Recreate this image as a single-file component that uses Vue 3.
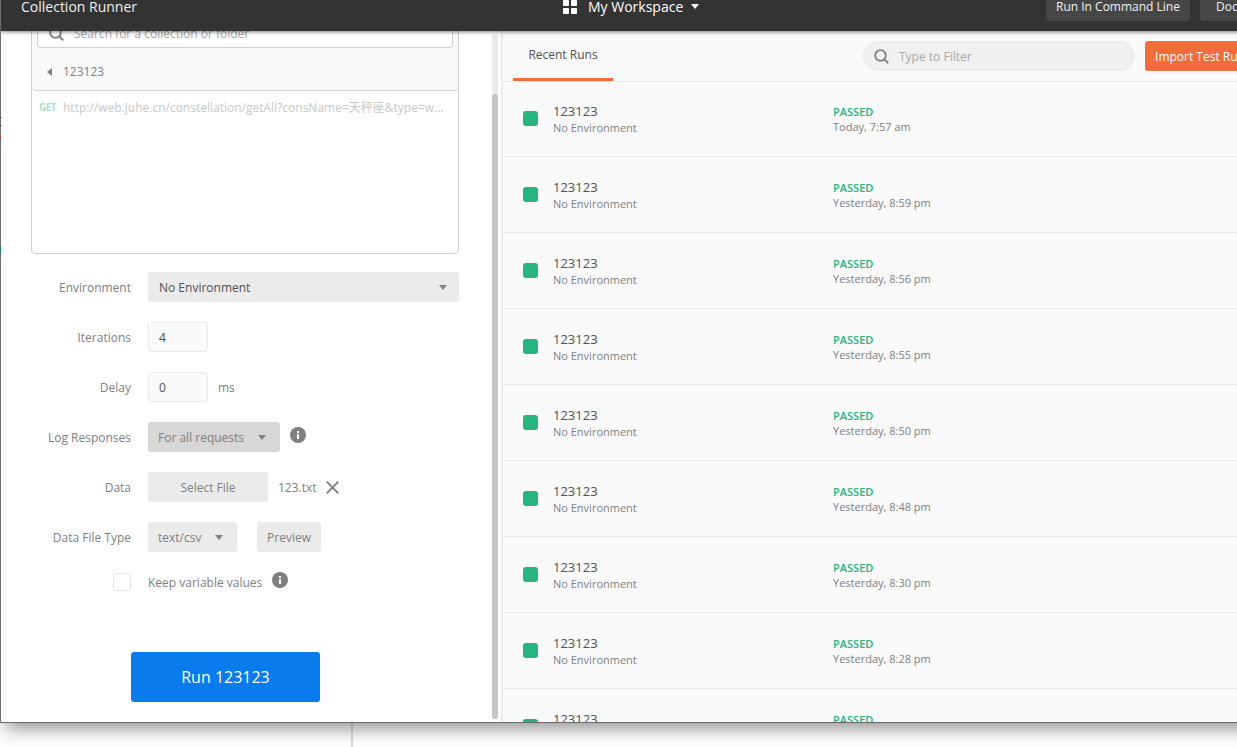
<!-- CollectionRunner -->

<script setup>
  import { ref } from 'vue'

  const collection = ref ( '123123' )
  const search = ref ( '' )
  const filter = ref ( '' )
  const iterations = ref ( '4' )
  const delay = ref ( '0' )
  const keep_values = ref ( false )

  const times = [
    'Today, 7:57 am',
    'Yesterday, 8:59 pm',
    'Yesterday, 8:56 pm',
    'Yesterday, 8:55 pm',
    'Yesterday, 8:50 pm',
    'Yesterday, 8:48 pm',
    'Yesterday, 8:30 pm',
    'Yesterday, 8:28 pm',
    'Yesterday, 8:26 pm',
  ]

  const runs = times.map ( ( time, id ) => ({
    id,
    time,
    name: '123123',
    environment: 'No Environment',
    status: 'PASSED',
  }))
</script>

<template>
  <div class="desktop">
    <div class="back_divider"></div>
    <div class="runner">
      <header class="runner_header">
        <div class="title">Collection Runner</div>
        <div class="workspace">
          <svg class="grid_icon" width="14" height="15" viewBox="0 0 14 15">
            <rect width="6" height="6" rx=".7" y="1" fill="#fff" />
            <rect width="6" height="6" rx=".7" x="8" y="1" fill="#fff" />
            <rect width="6" height="6" rx=".7" y="9" fill="#fff" />
            <rect width="6" height="6" rx=".7" x="8" y="9" fill="#fff" />
          </svg>
          <span>My Workspace</span>
          <svg class="white_caret" width="8" height="5" viewBox="0 0 8 5">
            <path d="M0 0h8L4 5z" fill="#fff" />
          </svg>
        </div>
        <div class="header_buttons">
          <button class="dark_btn">Run In Command Line</button>
          <button class="dark_btn docs">Docs</button>
        </div>
      </header>

      <div class="panes">
        <section class="config">
          <div class="config_content">
            <div class="picker">
              <div class="picker_head">
                <div class="search_box">
                  <svg width="15" height="15" viewBox="0 0 15 15">
                    <circle cx="6.500" cy="6.500" r="5.300" fill="none" stroke="#808080" stroke-width="1.800" />
                    <path d="M10.300 10.300l3.900 3.900" stroke="#808080" stroke-width="2" />
                  </svg>
                  <input v-model="search" placeholder="Search for a collection or folder">
                </div>
                <div class="crumb">
                  <svg width="5" height="8" viewBox="0 0 5 8">
                    <path d="M5 0v8L0 4z" fill="#808080" />
                  </svg>
                  <span>{{ collection }}</span>
                </div>
              </div>
              <div class="request">
                <span class="method">GET</span>
                <span class="url">http://web.juhe.cn/constellation/getAll?consName=天秤座&amp;type=w...</span>
              </div>
            </div>

            <div class="form_row">
              <label>Environment</label>
              <div class="select wide">
                <span>No Environment</span>
                <svg class="caret" width="8" height="5" viewBox="0 0 8 5"><path d="M0 0h8L4 5z" /></svg>
              </div>
            </div>
            <div class="form_row">
              <label>Iterations</label>
              <input v-model="iterations" class="number">
            </div>
            <div class="form_row">
              <label>Delay</label>
              <input v-model="delay" class="number">
              <span class="after">ms</span>
            </div>
            <div class="form_row">
              <label>Log Responses</label>
              <div class="select log">
                <span>For all requests</span>
                <svg class="caret" width="8" height="5" viewBox="0 0 8 5"><path d="M0 0h8L4 5z" /></svg>
              </div>
              <svg class="info" width="16" height="16" viewBox="0 0 16 16">
                <circle cx="8" cy="8" r="8" fill="#808080" />
                <path d="M7 4h2v2H7zM7 7h2v5H7z" fill="#fff" />
              </svg>
            </div>
            <div class="form_row">
              <label>Data</label>
              <button class="grey_btn file">Select File</button>
              <span class="after">123.txt</span>
              <svg class="remove" width="13" height="13" viewBox="0 0 13 13">
                <path d="M.700 .700l11.600 11.600M12.300 .700L.700 12.300" stroke="#808080" stroke-width="1.900" />
              </svg>
            </div>
            <div class="form_row">
              <label>Data File Type</label>
              <div class="select type">
                <span>text/csv</span>
                <svg class="caret" width="8" height="5" viewBox="0 0 8 5"><path d="M0 0h8L4 5z" /></svg>
              </div>
              <button class="grey_btn preview">Preview</button>
            </div>
            <div class="form_row keep">
              <label><input v-model="keep_values" type="checkbox" class="check"></label>
              <span>Keep variable values</span>
              <svg class="info" width="16" height="16" viewBox="0 0 16 16">
                <circle cx="8" cy="8" r="8" fill="#808080" />
                <path d="M7 4h2v2H7zM7 7h2v5H7z" fill="#fff" />
              </svg>
            </div>

            <button class="run_btn">Run {{ collection }}</button>
          </div>
          <div class="scroll_track">
            <div class="scroll_thumb"></div>
          </div>
        </section>

        <section class="results">
          <div class="results_head">
            <div class="tab">Recent Runs</div>
            <div class="filter_box">
              <svg width="15" height="15" viewBox="0 0 15 15">
                <circle cx="6.500" cy="6.500" r="5.300" fill="none" stroke="#808080" stroke-width="1.800" />
                <path d="M10.300 10.300l3.900 3.900" stroke="#808080" stroke-width="2" />
              </svg>
              <input v-model="filter" placeholder="Type to Filter">
            </div>
            <button class="import_btn">Import Test Run</button>
          </div>
          <div v-for="run in runs" :key="run.id" class="run">
            <div class="run_status"></div>
            <div class="run_name">
              <div class="name">{{ run.name }}</div>
              <div class="small">{{ run.environment }}</div>
            </div>
            <div class="run_result">
              <div class="passed">{{ run.status }}</div>
              <div class="small">{{ run.time }}</div>
            </div>
          </div>
        </section>
      </div>
    </div>
    <div class="back_edge"></div>
  </div>
</template>

<style>
  body {
    margin: 0;
    overflow: hidden;
  }
</style>

<style scoped>
  .desktop {
    position: relative;
    width: 1237px;
    height: 747px;
    overflow: hidden;
    background: #fff;
    font-family: "Open Sans", "Noto Sans CJK SC", sans-serif;
    font-size: 12px;
    line-height: 16px;
    color: #808080;
    white-space: nowrap;
  }
  .desktop * {
    box-sizing: border-box;
  }
  svg {
    display: block;
    flex: none;
  }
  button {
    border: 0;
    padding: 0;
    flex: none;
    font: inherit;
    color: inherit;
    border-radius: 3px;
  }
  input {
    font: inherit;
    color: #505050;
    min-width: 0;
    outline: 0;
  }
  input::placeholder {
    color: #a9a9a9;
    opacity: 1;
  }

  .back_divider {
    position: absolute;
    left: 351px;
    bottom: 0;
    width: 2px;
    height: 30px;
    background: #dcdcdc;
  }
  /* bits of the window behind, seen along the left border */
  .back_edge {
    position: absolute;
    left: 0;
    top: 117px;
    width: 1px;
    height: 136px;
    background: linear-gradient(
      #2b2b2b 1px, transparent 1px 8px,
      #2b2b2b 8px 9px, transparent 9px 19px,
      #a04a28 19px 22px, transparent 22px 129px,
      #1f7f5c 129px 136px
    );
  }
  .runner {
    position: relative;
    display: flex;
    flex-direction: column;
    width: 1260px;
    height: 723px;
    overflow: hidden;
    border-left: 1px solid #6e6e6e;
    border-bottom: 1px solid #6a6a6a;
    background: #fff;
    box-shadow: 5px 5px 18px rgba(0, 0, 0, .45);
  }

  .runner_header {
    position: relative;
    z-index: 1;
    display: flex;
    flex: none;
    align-items: center;
    height: 50px;
    margin-top: -19px;
    padding-left: 20px;
    background: #333;
    color: #f0f0f0;
    font-size: 14px;
    font-weight: 500;
    box-shadow: 0 1px 4px rgba(0, 0, 0, .5);
  }
  .title {
    flex: none;
    width: 542px;
    padding-top: 2px;
  }
  .workspace {
    display: flex;
    flex: none;
    align-items: center;
    width: 483px;
    color: #fff;
  }
  .workspace span {
    margin: 0 8px 0 11px;
    padding-top: 2px;
  }
  .header_buttons {
    display: flex;
    gap: 10px;
  }
  .dark_btn {
    width: 144px;
    height: 30px;
    padding-top: 2px;
    background: #464646;
    font-size: 12px;
  }
  .dark_btn.docs {
    padding-left: 16px;
    text-align: left;
  }

  .panes {
    display: flex;
    flex: 1;
    min-height: 0;
  }
  .config {
    display: flex;
    flex: none;
    width: 502px;
    border-right: 2px solid #ebebeb;
    overflow: hidden;
  }
  .config_content {
    width: 491px;
    padding-left: 30px;
  }
  .picker {
    width: 428px;
    height: 243px;
    margin: -20px 0 18px;
    border: 1px solid #d0d0d0;
    border-radius: 4px;
  }
  .picker_head {
    height: 79px;
    padding: 6px 5px 0;
    background: #fafafa;
    border-bottom: 1px solid #d0d0d0;
    border-radius: 0 0 4px 4px;
  }
  .search_box {
    display: flex;
    align-items: center;
    height: 30px;
    padding-left: 11px;
    background: #fff;
    border: 1px solid #d0d0d0;
    border-radius: 3px;
  }
  .search_box input,
  .filter_box input {
    flex: 1;
    margin-left: 10px;
    padding: 2px 0 0;
    border: 0;
    background: none;
  }
  .crumb {
    display: flex;
    align-items: center;
    height: 42px;
    padding: 5px 0 0 10px;
  }
  .crumb span {
    margin-left: 11px;
  }
  .request {
    display: flex;
    align-items: center;
    height: 32px;
    padding-left: 7px;
    color: #c8c8c8;
  }
  .method {
    width: 24px;
    font-size: 10px;
    font-weight: 700;
    letter-spacing: -.6px;
    color: #a8e1cb;
  }
  .url {
    padding-top: 1px;
  }

  .form_row {
    display: flex;
    align-items: center;
    height: 30px;
    margin-bottom: 20px;
  }
  .form_row label {
    width: 100px;
    margin-right: 17px;
    text-align: right;
  }
  .form_row label,
  .form_row span {
    padding-top: 2px;
  }
  .select {
    display: flex;
    align-items: center;
    justify-content: space-between;
    height: 30px;
    background: #ebebeb;
    border-radius: 3px;
  }
  .caret {
    fill: #808080;
  }
  .select.wide {
    width: 311px;
    padding: 0 12px 0 11px;
    color: #505050;
  }
  .select.log {
    width: 132px;
    padding: 0 14px 0 10px;
    background: #d7d7d7;
  }
  .select.type {
    width: 89px;
    padding: 0 14px 0 10px;
  }
  .number {
    width: 60px;
    height: 30px;
    padding: 0 10px;
    background: #fafafa;
    border: 1px solid #ebebeb;
    border-radius: 3px;
  }
  .after {
    margin-left: 10px;
  }
  .info {
    margin: -5px 0 0 10px;
  }
  .grey_btn {
    height: 30px;
    padding-top: 2px;
    background: #ebebeb;
  }
  .file {
    width: 120px;
  }
  .remove {
    margin-left: 9px;
  }
  .preview {
    width: 64px;
    margin-left: 20px;
  }
  .form_row.keep {
    margin: -5px 0 55px;
  }
  .form_row.keep label {
    padding-top: 0;
  }
  .check {
    display: block;
    appearance: none;
    width: 18px;
    height: 18px;
    margin: 0 0 0 auto;
    background: #fff;
    border: 1px solid #e6e6e6;
    border-radius: 3px;
  }
  .run_btn {
    width: 189px;
    height: 50px;
    margin-left: 100px;
    background: #097bed;
    color: #fff;
    font-size: 16px;
  }
  .scroll_track {
    width: 6px;
    height: 685px;
    margin-top: 3px;
    padding-top: 60px;
    background: #ebebeb;
    border-radius: 3px;
  }
  .scroll_thumb {
    height: 625px;
    background: #c5c5c5;
    border-radius: 3px;
  }

  .results {
    flex: 1;
    background: #fafafa;
    overflow: hidden;
  }
  .results_head {
    display: flex;
    height: 51px;
    margin-bottom: -1px;
    padding-left: 10px;
    border-bottom: 1px solid #ebebeb;
  }
  .tab {
    flex: none;
    width: 100px;
    height: 50px;
    padding-top: 16px;
    border-bottom: 3px solid #f26b3a;
    text-align: center;
    color: #505050;
  }
  .filter_box {
    display: flex;
    flex: none;
    align-items: center;
    width: 272px;
    height: 30px;
    margin: 10px 10px 0 250px;
    padding-left: 10px;
    background: #f0f0f0;
    border: 1px solid #ebebeb;
    border-radius: 15px;
  }
  .import_btn {
    width: 110px;
    height: 30px;
    margin-top: 10px;
    padding-top: 2px;
    background: #f26b3a;
    color: #fff;
  }
  .run {
    display: flex;
    height: 76px;
    padding-left: 20px;
    border-bottom: 1px solid #ebebeb;
  }
  .run_status {
    width: 15px;
    height: 15px;
    margin: 30px 15px 0 0;
    background: #26b47f;
    border-radius: 3px;
  }
  .run_name {
    width: 280px;
    padding-top: 22px;
  }
  .name {
    font-size: 13px;
    line-height: 17px;
    color: #505050;
  }
  .small {
    font-size: 11px;
  }
  .run_result {
    padding-top: 23px;
  }
  .passed {
    font-size: 11px;
    font-weight: 600;
    line-height: 15px;
    color: #26b47f;
  }
</style>
